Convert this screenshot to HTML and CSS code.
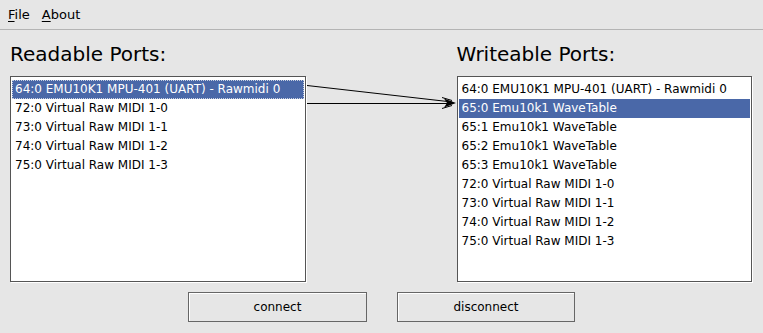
FILE: index.html
```html
<!DOCTYPE html>
<html lang="en">
<head>
    <meta charset="UTF-8">
    <title>ALSA Connections</title>
    <link rel="stylesheet" href="styles.css">
</head>
<body>
    <div class="menubar">
        <span class="menu"><u>F</u>ile</span>
        <span class="menu"><u>A</u>bout</span>
    </div>

    <div class="panels">
        <div class="panel">
            <h2>Readable Ports:</h2>
            <ul class="listbox">
                <li class="selected focus">64:0 EMU10K1 MPU-401 (UART) - Rawmidi 0</li>
                <li>72:0 Virtual Raw MIDI 1-0</li>
                <li>73:0 Virtual Raw MIDI 1-1</li>
                <li>74:0 Virtual Raw MIDI 1-2</li>
                <li>75:0 Virtual Raw MIDI 1-3</li>
            </ul>
        </div>
        <div class="panel">
            <h2>Writeable Ports:</h2>
            <ul class="listbox">
                <li>64:0 EMU10K1 MPU-401 (UART) - Rawmidi 0</li>
                <li class="selected">65:0 Emu10k1 WaveTable</li>
                <li>65:1 Emu10k1 WaveTable</li>
                <li>65:2 Emu10k1 WaveTable</li>
                <li>65:3 Emu10k1 WaveTable</li>
                <li>72:0 Virtual Raw MIDI 1-0</li>
                <li>73:0 Virtual Raw MIDI 1-1</li>
                <li>74:0 Virtual Raw MIDI 1-2</li>
                <li>75:0 Virtual Raw MIDI 1-3</li>
            </ul>
        </div>

        <!-- connection lines drawn over the gap between the lists -->
        <svg class="wires" width="763" height="333" viewBox="0 0 763 333">
            <line x1="307" y1="85.5" x2="452" y2="102" stroke="#000" stroke-width="1"/>
            <line x1="307" y1="103.5" x2="452" y2="103.5" stroke="#000" stroke-width="1"/>
            <path d="M456 103 L444 98.5 L447 103 L444 107.5 Z" fill="#000"/>
            <path d="M452 100.5 L442 97.5 M452 105.5 L442 108.5" stroke="#000" stroke-width="1"/>
        </svg>
    </div>

    <div class="buttons">
        <button class="connect">connect</button>
        <button class="disconnect">disconnect</button>
    </div>
</body>
</html>
```

FILE: styles.css
```css
* {
    margin: 0;
    padding: 0;
    box-sizing: border-box;
}

body {
    width: 763px;
    height: 333px;
    background: #e6e6e6;
    font-family: 'DejaVu Sans', Verdana, sans-serif;
    font-size: 12px;
    color: #000;
    position: relative;
    overflow: hidden;
}

.menubar {
    height: 30px;
    border-bottom: 1px solid #b4b4b4;
    padding: 7px 0 0 8px;
    font-size: 13px;
    display: flex;
    gap: 12px;
}

.menubar u {
    text-decoration: underline;
    text-underline-offset: 2px;
}

.panels {
    display: flex;
    padding: 0 11px 0 10px;
    gap: 151px;
}

.panel {
    width: 296px;
}

.panel h2 {
    font-weight: normal;
    font-size: 20px;
    height: 46px;
    padding-top: 12px;
    line-height: 24px;
}

.listbox {
    list-style: none;
    background: #fff;
    border: 1px solid #555;
    height: 206px;
    padding: 3px 1px 1px;
    box-shadow: 1px 1px 0 #fff;
}

.listbox li {
    height: 19px;
    line-height: 19px;
    padding-left: 3px;
    white-space: nowrap;
}

.listbox li.selected {
    background: #4a68a8;
    color: #fff;
}

.listbox li.focus {
    outline: 1px dotted #c8d0e0;
    outline-offset: -1px;
}

.wires {
    position: absolute;
    left: 0;
    top: 0;
    pointer-events: none;
}

.buttons {
    display: flex;
    gap: 30px;
    padding: 10px 0 0 188px;
}

.buttons button {
    width: 179px;
    height: 30px;
    background: #e6e6e6;
    border: 1px solid #666;
    box-shadow: inset 1px 1px 0 #fff;
    font-family: 'DejaVu Sans', Verdana, sans-serif;
    font-size: 12px;
    color: #000;
}

.buttons .disconnect {
    width: 178px;
}
```
